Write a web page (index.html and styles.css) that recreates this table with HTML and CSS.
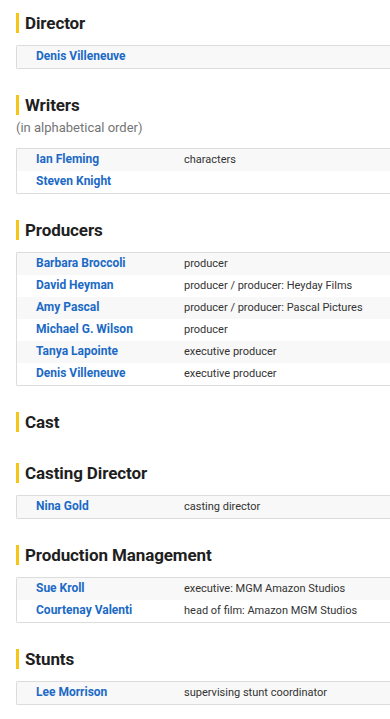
FILE: index.html
```html
<!DOCTYPE html>
<html lang="en">
<head>
<meta charset="utf-8">
<title>Full Credits</title>
<link rel="stylesheet" href="styles.css">
</head>
<body>
<main class="page">
  <section class="sec">
    <h2 class="title">Director</h2>
    <div class="box">
      <div class="row"><a class="name" href="#">Denis Villeneuve</a><span class="role"></span></div>
    </div>
  </section>

  <section class="sec">
    <h2 class="title">Writers</h2>
    <p class="note">(in alphabetical order)</p>
    <div class="box box-note">
      <div class="row"><a class="name" href="#">Ian Fleming</a><span class="role">characters</span></div>
      <div class="row"><a class="name" href="#">Steven Knight</a><span class="role"></span></div>
    </div>
  </section>

  <section class="sec">
    <h2 class="title">Producers</h2>
    <div class="box">
      <div class="row"><a class="name" href="#">Barbara Broccoli</a><span class="role">producer</span></div>
      <div class="row"><a class="name" href="#">David Heyman</a><span class="role">producer / producer: Heyday Films</span></div>
      <div class="row"><a class="name" href="#">Amy Pascal</a><span class="role">producer / producer: Pascal Pictures</span></div>
      <div class="row"><a class="name" href="#">Michael G. Wilson</a><span class="role">producer</span></div>
      <div class="row"><a class="name" href="#">Tanya Lapointe</a><span class="role">executive producer</span></div>
      <div class="row"><a class="name" href="#">Denis Villeneuve</a><span class="role">executive producer</span></div>
    </div>
  </section>

  <section class="sec sec-empty">
    <h2 class="title">Cast</h2>
  </section>

  <section class="sec">
    <h2 class="title">Casting Director</h2>
    <div class="box">
      <div class="row"><a class="name" href="#">Nina Gold</a><span class="role">casting director</span></div>
    </div>
  </section>

  <section class="sec">
    <h2 class="title">Production Management</h2>
    <div class="box">
      <div class="row"><a class="name" href="#">Sue Kroll</a><span class="role">executive: MGM Amazon Studios</span></div>
      <div class="row"><a class="name" href="#">Courtenay Valenti</a><span class="role">head of film: Amazon MGM Studios</span></div>
    </div>
  </section>

  <section class="sec">
    <h2 class="title">Stunts</h2>
    <div class="box">
      <div class="row"><a class="name" href="#">Lee Morrison</a><span class="role">supervising stunt coordinator</span></div>
    </div>
  </section>
</main>
</body>
</html>
```

FILE: styles.css
```css
html, body {
  margin: 0;
  padding: 0;
  background: #ffffff;
}

body {
  font-family: Roboto, "Liberation Sans", Arial, sans-serif;
  color: #1f1f1f;
}

.page {
  padding: 13px 0 0 16px;
}

.sec {
  margin-bottom: 26px;
}

.sec-empty {
  margin-bottom: 31px;
}

.title {
  margin: 0;
  border-left: 3px solid #f5c518;
  padding-left: 6px;
  font-size: 17px;
  font-weight: 700;
  line-height: 20px;
  height: 20px;
  color: #1f1f1f;
  letter-spacing: -0.1px;
}

.note {
  margin: 4px 0 0 0;
  font-size: 13px;
  line-height: 18px;
  color: #757575;
}

.box {
  margin-top: 12px;
  border: 1px solid #dcdcdc;
  border-right: none;
  border-radius: 2px 0 0 2px;
  overflow: hidden;
}

.box-note {
  margin-top: 11px;
}

.row {
  box-sizing: border-box;
  display: grid;
  grid-template-columns: 148px auto;
  align-items: center;
  height: 22px;
  padding: 0 0 2px 19px;
  background: #ffffff;
}

.row:nth-child(odd) {
  background: #f8f8f8;
}

.name {
  font-size: 12px;
  font-weight: 700;
  color: #1b6ac6;
  text-decoration: none;
  white-space: nowrap;
}

.role {
  font-size: 11px;
  color: #333333;
  white-space: nowrap;
}
```
